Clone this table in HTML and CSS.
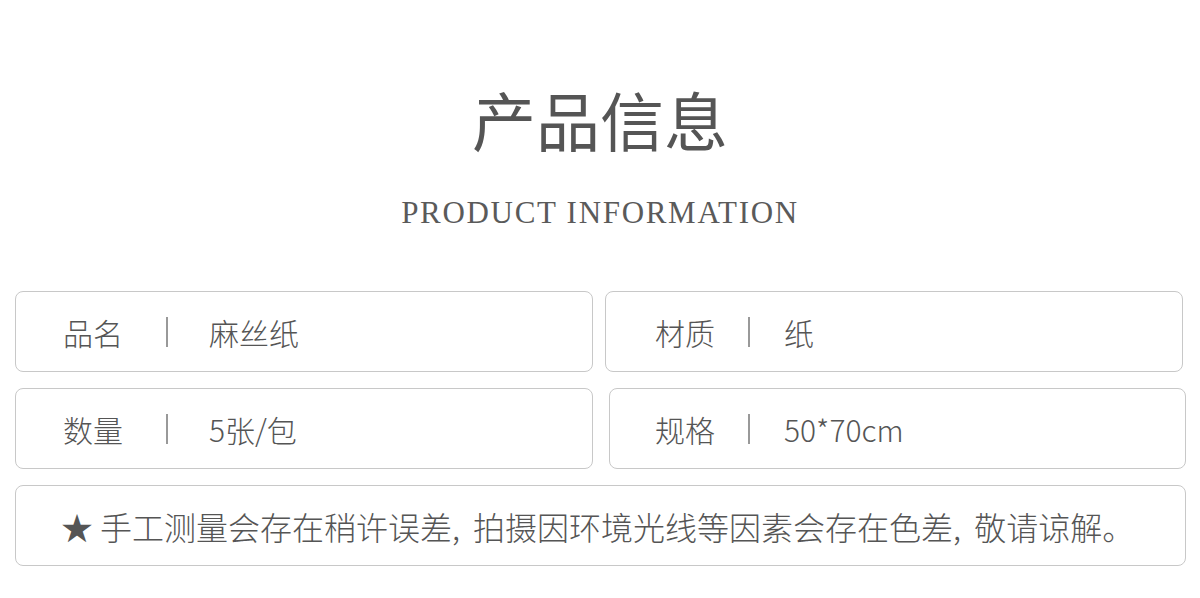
FILE: index.html
```html
<!DOCTYPE html>
<html lang="zh-CN">
<head>
    <meta charset="utf-8">
    <title>产品信息</title>
    <link rel="stylesheet" href="styles.css">
</head>
<body>
    <main>
        <header class="head">
            <h1>产品信息</h1>
            <p class="sub">PRODUCT INFORMATION</p>
        </header>

        <div class="grid">
            <div class="cell left">
                <span class="label">品名</span><span class="sep"></span><span class="val">麻丝纸</span>
            </div>
            <div class="cell right">
                <span class="label">材质</span><span class="sep"></span><span class="val">纸</span>
            </div>
            <div class="cell left">
                <span class="label">数量</span><span class="sep"></span><span class="val">5张/包</span>
            </div>
            <div class="cell right shift">
                <span class="label">规格</span><span class="sep"></span><span class="val">50*70cm</span>
            </div>
            <div class="cell note">★ 手工测量会存在稍许误差<span class="cm">,</span>拍摄因环境光线等因素会存在色差<span class="cm">,</span>敬请谅解。</div>
        </div>
    </main>
</body>
</html>
```

FILE: styles.css
```css
body {
    margin: 0;
    background: #fff;
    color: #555;
    font-family: "Noto Sans CJK SC", "Noto Sans", sans-serif;
}

main {
    padding: 0 15px;
}

.head {
    text-align: center;
    padding-top: 86px;
}

.head h1 {
    margin: 0;
    font-size: 64px;
    line-height: 64px;
    font-weight: 400;
    color: #555;
}

.sub {
    margin: 48px 0 0;
    font-family: "Liberation Serif", serif;
    font-size: 31px;
    line-height: 30px;
    letter-spacing: 1.7px;
    color: #5a5a5a;
}

.grid {
    margin-top: 63px;
    display: grid;
    grid-template-columns: 578px 578px;
    column-gap: 12px;
    row-gap: 16px;
}

.cell {
    height: 79px;
    border: 1px solid #c8c8c8;
    border-radius: 8px;
    display: flex;
    align-items: center;
    font-size: 30px;
    font-weight: 300;
}

.left { padding-left: 47px; }
.left .label { width: 103px; }
.left .val { margin-left: 41px; }

.right { padding-left: 49px; }
.right .label { width: 93px; }
.right .val { margin-left: 34px; }

.shift {
    margin-left: 4px;
    margin-right: -3px;
    padding-left: 45px;
}

.sep {
    width: 2px;
    height: 30px;
    background: #999;
}

.note {
    grid-column: 1 / 3;
    margin-right: -3px;
    padding-left: 45px;
    font-size: 32px;
}

.cm {
    margin-right: 13px;
}
```
